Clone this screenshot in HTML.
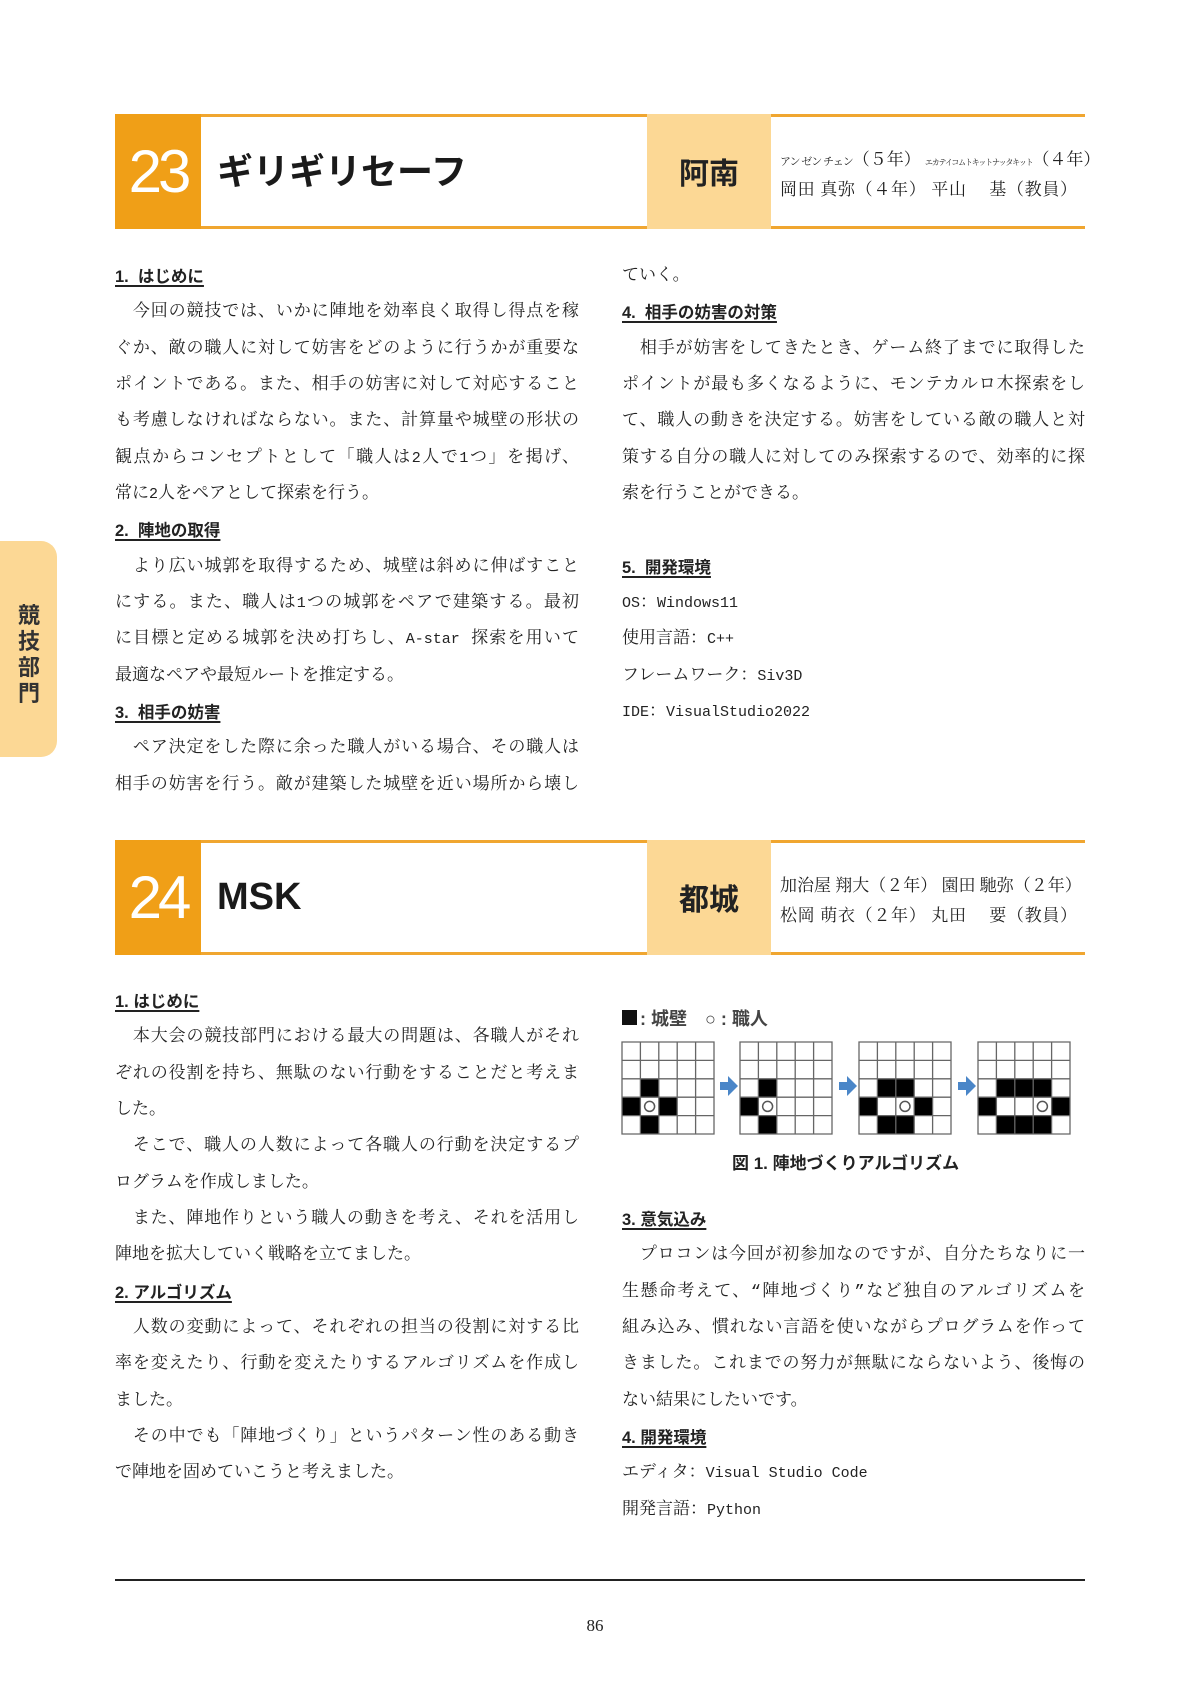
<!DOCTYPE html>
<html><head><meta charset="utf-8"><style>
*{margin:0;padding:0;box-sizing:border-box}
body{width:1190px;height:1683px;background:#fff;position:relative;overflow:hidden;font-family:"Liberation Mono","Noto Serif CJK SC",monospace;color:#222}
.hdr{position:absolute;left:115px;width:970px;height:115px;border-top:3px solid #f0a630;border-bottom:3px solid #f0a630}
.num{position:absolute;left:0;top:-3px;width:86px;height:115px;background:#f09f17;color:#fff;font-family:"Liberation Sans",sans-serif;font-size:60px;letter-spacing:-4px;line-height:115px;text-align:center}
.ttl{position:absolute;left:102px;top:0;height:109px;line-height:109px;font-family:"Liberation Sans","Noto Sans CJK JP",sans-serif;font-weight:bold;font-size:36px;color:#1a1a1a}
.sch{position:absolute;left:532px;top:-3px;width:124px;height:115px;background:#fcd895;font-family:"Noto Sans CJK JP",sans-serif;font-weight:bold;font-size:30px;line-height:115px;text-align:center;color:#222}
.mem{position:absolute;left:665px;width:297px;font-family:"Liberation Serif","Noto Serif CJK SC",serif;font-size:17px;white-space:nowrap;color:#222;text-align:justify;text-align-last:justify}
.c{position:absolute;font-size:17px;height:36px;line-height:36px;white-space:nowrap}
.L{left:115px;width:464px}.R{left:622px;width:463px}
.j{text-align:justify;text-align-last:justify;white-space:normal;overflow:hidden}
.h{font-family:"Liberation Sans","Noto Sans CJK JP",sans-serif;font-weight:bold;font-size:16.5px}
.h span{text-decoration:underline;text-underline-offset:3px;text-decoration-thickness:1.5px}
.m{font-size:15px}
.tab{position:absolute;left:0;top:541px;width:57px;height:216px;background:#fcd895;border-radius:0 16px 16px 0}
.tab div{position:absolute;left:16px;top:60px;width:26px;font-family:"Noto Sans CJK JP",sans-serif;font-weight:bold;font-size:22px;line-height:26px;color:#333;text-align:center}
</style></head><body>
<div class="tab"><div>競<br>技<br>部<br>門</div></div>

<div class="hdr" style="top:114px">
<div class="num">23</div>
<div class="ttl">ギリギリセーフ</div>
<div class="sch">阿南</div>
<div class="mem" style="top:28px"><span style="font-size:11px;letter-spacing:-1px">アン ゼン チェン</span>（５年） <span style="font-size:8px;letter-spacing:-1.2px">エカテイコムトキットナッタキット</span>（４年）</div>
<div class="mem" style="top:58px">岡田 真弥（４年） 平山　 基（教員）</div>
</div>

<div class="c L h" style="top:259px"><span>1.&nbsp; はじめに</span></div>
<div class="c L j" style="top:295px">&emsp;今回の競技では、いかに陣地を効率良く取得し得点を稼</div>
<div class="c L j" style="top:332px">ぐか、敵の職人に対して妨害をどのように行うかが重要な</div>
<div class="c L j" style="top:368px">ポイントである。また、相手の妨害に対して対応すること</div>
<div class="c L j" style="top:404px">も考慮しなければならない。また、計算量や城壁の形状の</div>
<div class="c L j" style="top:441px">観点からコンセプトとして「職人は<span class="m">2</span>人で<span class="m">1</span>つ」を掲げ、</div>
<div class="c L" style="top:477px">常に<span class="m">2</span>人をペアとして探索を行う。</div>
<div class="c L h" style="top:513px"><span>2.&nbsp; 陣地の取得</span></div>
<div class="c L j" style="top:550px">&emsp;より広い城郭を取得するため、城壁は斜めに伸ばすこと</div>
<div class="c L j" style="top:586px">にする。また、職人は<span class="m">1</span>つの城郭をペアで建築する。最初</div>
<div class="c L j" style="top:622px">に目標と定める城郭を決め打ちし、<span class="m">A-star</span> 探索を用いて</div>
<div class="c L" style="top:659px">最適なペアや最短ルートを推定する。</div>
<div class="c L h" style="top:695px"><span>3.&nbsp; 相手の妨害</span></div>
<div class="c L j" style="top:731px">&emsp;ペア決定をした際に余った職人がいる場合、その職人は</div>
<div class="c L j" style="top:768px">相手の妨害を行う。敵が建築した城壁を近い場所から壊し</div>

<div class="c R" style="top:259px">ていく。</div>
<div class="c R h" style="top:295px"><span>4.&nbsp; 相手の妨害の対策</span></div>
<div class="c R j" style="top:332px">&emsp;相手が妨害をしてきたとき、ゲーム終了までに取得した</div>
<div class="c R j" style="top:368px">ポイントが最も多くなるように、モンテカルロ木探索をし</div>
<div class="c R j" style="top:404px">て、職人の動きを決定する。妨害をしている敵の職人と対</div>
<div class="c R j" style="top:441px">策する自分の職人に対してのみ探索するので、効率的に探</div>
<div class="c R" style="top:477px">索を行うことができる。</div>
<div class="c R h" style="top:550px"><span>5.&nbsp; 開発環境</span></div>
<div class="c R" style="top:586px"><span class="m">OS</span>：<span class="m">Windows11</span></div>
<div class="c R" style="top:622px">使用言語：<span class="m">C++</span></div>
<div class="c R" style="top:659px">フレームワーク：<span class="m">Siv3D</span></div>
<div class="c R" style="top:695px"><span class="m">IDE</span>：<span class="m">VisualStudio2022</span></div>

<div class="hdr" style="top:840px">
<div class="num">24</div>
<div class="ttl" style="font-size:38px">MSK</div>
<div class="sch">都城</div>
<div class="mem" style="top:28px">加治屋 翔大（２年） 園田 馳弥（２年）</div>
<div class="mem" style="top:58px">松岡 萌衣（２年） 丸田　 要（教員）</div>
</div>

<div class="c L h" style="top:984px"><span>1. はじめに</span></div>
<div class="c L j" style="top:1020px">&emsp;本大会の競技部門における最大の問題は、各職人がそれ</div>
<div class="c L j" style="top:1057px">ぞれの役割を持ち、無駄のない行動をすることだと考えま</div>
<div class="c L" style="top:1093px">した。</div>
<div class="c L j" style="top:1129px">&emsp;そこで、職人の人数によって各職人の行動を決定するプ</div>
<div class="c L" style="top:1166px">ログラムを作成しました。</div>
<div class="c L j" style="top:1202px">&emsp;また、陣地作りという職人の動きを考え、それを活用し</div>
<div class="c L" style="top:1238px">陣地を拡大していく戦略を立てました。</div>
<div class="c L h" style="top:1275px"><span>2. アルゴリズム</span></div>
<div class="c L j" style="top:1311px">&emsp;人数の変動によって、それぞれの担当の役割に対する比</div>
<div class="c L j" style="top:1347px">率を変えたり、行動を変えたりするアルゴリズムを作成し</div>
<div class="c L" style="top:1384px">ました。</div>
<div class="c L j" style="top:1420px">&emsp;その中でも「陣地づくり」というパターン性のある動き</div>
<div class="c L" style="top:1456px">で陣地を固めていこうと考えました。</div>

<svg style="position:absolute;left:620px;top:1000px" width="470" height="180" viewBox="0 0 470 180">
<rect x="2" y="10" width="15" height="15" fill="#111"/>
<text x="20" y="25" font-family="Liberation Sans,Noto Sans CJK JP,sans-serif" font-weight="bold" font-size="18" fill="#444">: 城壁　○ : 職人</text>
<g transform="translate(2,42)">
<rect x="18.4" y="36.8" width="18.4" height="18.4" fill="#000"/><rect x="0" y="55.2" width="18.4" height="18.4" fill="#000"/><rect x="36.8" y="55.2" width="18.4" height="18.4" fill="#000"/><rect x="18.4" y="73.6" width="18.4" height="18.4" fill="#000"/>
<circle cx="27.6" cy="64.4" r="5" fill="none" stroke="#555" stroke-width="1.5"/>
<path d="M0 0H92V92H0ZM18.4 0V92M36.8 0V92M55.2 0V92M73.6 0V92M0 18.4H92M0 36.8H92M0 55.2H92M0 73.6H92" fill="none" stroke="#666" stroke-width="1.3"/>
</g>
<g transform="translate(120,42)">
<rect x="18.4" y="36.8" width="18.4" height="18.4" fill="#000"/><rect x="0" y="55.2" width="18.4" height="18.4" fill="#000"/><rect x="18.4" y="73.6" width="18.4" height="18.4" fill="#000"/>
<circle cx="27.6" cy="64.4" r="5" fill="none" stroke="#555" stroke-width="1.5"/>
<path d="M0 0H92V92H0ZM18.4 0V92M36.8 0V92M55.2 0V92M73.6 0V92M0 18.4H92M0 36.8H92M0 55.2H92M0 73.6H92" fill="none" stroke="#666" stroke-width="1.3"/>
</g>
<g transform="translate(239,42)">
<rect x="18.4" y="36.8" width="36.8" height="18.4" fill="#000"/><rect x="0" y="55.2" width="18.4" height="18.4" fill="#000"/><rect x="55.2" y="55.2" width="18.4" height="18.4" fill="#000"/><rect x="18.4" y="73.6" width="36.8" height="18.4" fill="#000"/>
<circle cx="46" cy="64.4" r="5" fill="none" stroke="#555" stroke-width="1.5"/>
<path d="M0 0H92V92H0ZM18.4 0V92M36.8 0V92M55.2 0V92M73.6 0V92M0 18.4H92M0 36.8H92M0 55.2H92M0 73.6H92" fill="none" stroke="#666" stroke-width="1.3"/>
</g>
<g transform="translate(358,42)">
<rect x="18.4" y="36.8" width="55.2" height="18.4" fill="#000"/><rect x="0" y="55.2" width="18.4" height="18.4" fill="#000"/><rect x="73.6" y="55.2" width="18.4" height="18.4" fill="#000"/><rect x="18.4" y="73.6" width="55.2" height="18.4" fill="#000"/>
<circle cx="64.4" cy="64.4" r="5" fill="none" stroke="#555" stroke-width="1.5"/>
<path d="M0 0H92V92H0ZM18.4 0V92M36.8 0V92M55.2 0V92M73.6 0V92M0 18.4H92M0 36.8H92M0 55.2H92M0 73.6H92" fill="none" stroke="#666" stroke-width="1.3"/>
</g>
<path d="M100 82h8v-6l10 10-10 10v-6h-8z" fill="#4a86c8"/>
<path d="M219 82h8v-6l10 10-10 10v-6h-8z" fill="#4a86c8"/>
<path d="M338 82h8v-6l10 10-10 10v-6h-8z" fill="#4a86c8"/>
<text x="112" y="169" font-family="Liberation Sans,Noto Sans CJK JP,sans-serif" font-weight="bold" font-size="17" fill="#222">図 1.  陣地づくりアルゴリズム</text>
</svg>

<div class="c R h" style="top:1202px"><span>3. 意気込み</span></div>
<div class="c R j" style="top:1238px">&emsp;プロコンは今回が初参加なのですが、自分たちなりに一</div>
<div class="c R j" style="top:1275px">生懸命考えて、“陣地づくり”など独自のアルゴリズムを</div>
<div class="c R j" style="top:1311px">組み込み、慣れない言語を使いながらプログラムを作って</div>
<div class="c R j" style="top:1347px">きました。これまでの努力が無駄にならないよう、後悔の</div>
<div class="c R" style="top:1384px">ない結果にしたいです。</div>
<div class="c R h" style="top:1420px"><span>4. 開発環境</span></div>
<div class="c R" style="top:1456px">エディタ：<span class="m">Visual Studio Code</span></div>
<div class="c R" style="top:1493px">開発言語：<span class="m">Python</span></div>

<div style="position:absolute;left:115px;top:1579px;width:970px;height:2px;background:#222"></div>
<div style="position:absolute;left:0;width:1190px;top:1616px;text-align:center;font-size:17px;font-family:'Liberation Serif',serif">86</div>
</body></html>
